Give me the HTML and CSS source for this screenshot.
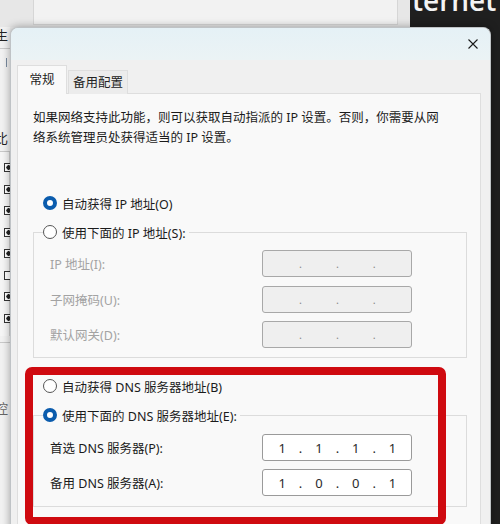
FILE: index.html
```html
<!DOCTYPE html>
<html lang="zh-CN">
<head>
    <meta charset="UTF-8">
    <title>Internet 协议版本 4 (TCP/IPv4) 属性</title>
    <link rel="stylesheet" href="styles.css">
</head>
<body>

<div class="screen">
    <div class="top">
        <div class="top-left"><div class="top-box"></div></div>
        <div class="top-dark"><span class="brand">ternet</span></div>
    </div>

    <div class="main">
        <div class="bgwin">
            <span class="bg-char first">生</span>
            <div class="bg-line"></div>
            <span class="bg-mark"></span>
            <span class="bg-char second">比</span>
            <div class="bg-line"></div>
            <div class="checks">
                <span class="check on"></span>
                <span class="check on"></span>
                <span class="check on"></span>
                <span class="check on"></span>
                <span class="check on"></span>
                <span class="check"></span>
                <span class="check on"></span>
                <span class="check on"></span>
            </div>
            <div class="bg-line"></div>
            <span class="bg-char third">控</span>
        </div>

        <div class="dialog">
            <div class="titlebar">
                <div class="close">
                    <svg width="10" height="10" viewBox="0 0 10 10">
                        <path d="M0.5 0.5 L9.5 9.5 M9.5 0.5 L0.5 9.5" stroke="#1a1a1a" stroke-width="1.1" fill="none"/>
                    </svg>
                </div>
            </div>

            <div class="dlg-body">
                <div class="tabs">
                    <div class="tab active">常规</div>
                    <div class="tab">备用配置</div>
                </div>

                <div class="panel">
                    <p class="intro">如果网络支持此功能，则可以获取自动指派的 IP 设置。否则，你需要从网<br>络系统管理员处获得适当的 IP 设置。</p>

                    <label class="radio checked solo"><span class="dot"></span>自动获得 IP 地址(O)</label>

                    <fieldset class="group ip-group">
                        <legend><label class="radio"><span class="dot"></span>使用下面的 IP 地址(S):</label></legend>
                        <div class="field disabled">
                            <span class="field-label">IP 地址(I):</span>
                            <div class="ip"><span></span><i>.</i><span></span><i>.</i><span></span><i>.</i><span></span></div>
                        </div>
                        <div class="field disabled">
                            <span class="field-label">子网掩码(U):</span>
                            <div class="ip"><span></span><i>.</i><span></span><i>.</i><span></span><i>.</i><span></span></div>
                        </div>
                        <div class="field disabled">
                            <span class="field-label">默认网关(D):</span>
                            <div class="ip"><span></span><i>.</i><span></span><i>.</i><span></span><i>.</i><span></span></div>
                        </div>
                    </fieldset>

                    <label class="radio solo dns-auto"><span class="dot"></span>自动获得 DNS 服务器地址(B)</label>

                    <fieldset class="group dns-group">
                        <legend><label class="radio checked"><span class="dot"></span>使用下面的 DNS 服务器地址(E):</label></legend>
                        <div class="field">
                            <span class="field-label">首选 DNS 服务器(P):</span>
                            <div class="ip"><span>1</span><i>.</i><span>1</span><i>.</i><span>1</span><i>.</i><span>1</span></div>
                        </div>
                        <div class="field">
                            <span class="field-label">备用 DNS 服务器(A):</span>
                            <div class="ip"><span>1</span><i>.</i><span>0</span><i>.</i><span>0</span><i>.</i><span>1</span></div>
                        </div>
                    </fieldset>
                </div>
            </div>
        </div>

        <div class="right-dark"></div>
    </div>

    <div class="highlight"></div>
</div>

</body>
</html>
```

FILE: styles.css
```css
body {
    margin: 0;
    font-family: "Noto Sans", "Noto Sans CJK SC", sans-serif;
    font-size: 12.5px;
    color: #1b1b1b;
    background: #1f1f1f;
}
.screen {
    position: relative;
    width: 500px;
    height: 524px;
    overflow: hidden;
    display: flex;
    flex-direction: column;
}

/* background behind the dialog */
.top {
    display: flex;
    height: 27px;
    flex: none;
}
.top-left {
    width: 410px;
    background: #e7e7e7;
    padding-left: 33px;
    padding-right: 12px;
    box-sizing: border-box;
}
.top-box {
    height: 25px;
    background: #f2f2f2;
    border: 1px solid #d6d6d6;
    border-top: none;
    box-sizing: border-box;
}
.top-dark {
    width: 90px;
    background: #1f1f1f;
    overflow: hidden;
}
.brand {
    display: block;
    margin: -14px 0 0 2px;
    font-family: "Open Sans", sans-serif;
    font-weight: 600;
    font-size: 28px;
    line-height: 28px;
    color: #f4f4f4;
}
.main {
    flex: 1;
    display: flex;
    background: linear-gradient(to right, #ececec 250px, #1f1f1f 250px);
}
.bgwin {
    width: 10px;
    flex: none;
    background: #f2f2f2;
    overflow: hidden;
    display: flex;
    flex-direction: column;
}
.bg-char {
    display: block;
    width: 14px;
    margin-left: -5px;
    font-family: "Noto Sans CJK SC", sans-serif;
    font-size: 13px;
    line-height: 14px;
    color: #222;
}
.bg-char.first { margin-top: 1px; }
.bg-char.second { margin-top: 64px; }
.bg-char.third { margin-top: 58px; color: #666; }
.bg-line {
    height: 1px;
    background: #c9c9c9;
    margin-top: 6px;
}
.bg-mark {
    display: block;
    width: 3px;
    height: 9px;
    margin: 9px 0 0 6px;
    border-left: 1px solid #7a8ba0;
}
.checks {
    display: flex;
    flex-direction: column;
    gap: 12.5px;
    padding: 11px 0 13px 4px;
    border-right: 1px solid #d2d2d2;
    background: #f6f6f6;
}
.check {
    width: 8px;
    height: 9px;
    box-sizing: border-box;
    border: 1px solid #333;
    background: #fff;
}
.check.on {
    background: radial-gradient(circle at 60% 50%, #222 2px, #fff 2.5px);
}
.right-dark {
    width: 9px;
    flex: none;
}

/* dialog */
.dialog {
    width: 481px;
    flex: none;
    background: #f0f0f0;
    border: 1px solid #bfc3c6;
    border-bottom: none;
    border-radius: 8px 8px 0 0;
    box-sizing: border-box;
    box-shadow: 0 0 8px rgba(0, 0, 0, 0.35);
    overflow: hidden;
}
.titlebar {
    height: 32px;
    background: linear-gradient(#e5f1f6, #ebf3f5);
    display: flex;
    justify-content: flex-end;
    align-items: center;
}
.close {
    width: 35px;
    height: 32px;
    display: flex;
    align-items: center;
    justify-content: center;
}
.dlg-body {
    padding: 5px 9px 0 6px;
}
.tabs {
    display: flex;
    align-items: flex-end;
    gap: 1px;
    margin-bottom: -1px;
    position: relative;
}
.tab {
    height: 24px;
    width: 60px;
    box-sizing: border-box;
    border: 1px solid #dedede;
    border-bottom: none;
    background: #ececec;
    text-align: center;
    line-height: 23px;
    color: #222;
}
.tab.active {
    width: 50px;
    height: 29px;
    line-height: 28px;
    background: #f9f9f9;
}
.panel {
    background: #f9f9f9;
    border: 1px solid #dedede;
    padding: 14px 13px 40px 15px;
    height: 460px;
}
.intro {
    margin: 0;
    line-height: 20px;
}

/* radios */
.radio {
    display: flex;
    align-items: center;
    height: 20px;
    white-space: nowrap;
}
.radio .dot {
    width: 14px;
    height: 14px;
    box-sizing: border-box;
    border: 1px solid #555;
    border-radius: 50%;
    background: #fff;
    margin-right: 5px;
    flex: none;
}
.radio.checked .dot {
    border: 4px solid #0b5cad;
}
.radio.solo {
    margin-left: 10px;
}
.ip-group ~ .radio.solo {
    margin-top: 18px;
}
.panel > .radio.solo:first-of-type {
    margin-top: 45px;
}

/* group boxes */
.group {
    margin: 9px 0 0 0;
    padding: 8px 13px 9px 9px;
    border: 1px solid #dcdcdc;
    min-width: 0;
}
.group legend {
    padding: 0 3px 0 0;
}
.dns-group {
    padding-top: 9px;
    padding-bottom: 10px;
}
.field {
    display: flex;
    align-items: center;
    height: 27px;
    margin-left: 7px;
}
.ip-group .field + .field { margin-top: 8.5px; }
.dns-group .field + .field { margin-top: 8px; }
.field-label {
    width: 212px;
    flex: none;
}
.field.disabled .field-label {
    color: #a3a3a3;
}
.ip {
    width: 150px;
    height: 27px;
    box-sizing: border-box;
    border: 1px solid #9a9a9a;
    border-radius: 3px;
    background: #fff;
    display: grid;
    grid-template-columns: repeat(7, 18.4px);
    align-items: center;
    padding-left: 10px;
    font-size: 13px;
    color: #2a2a2a;
}
.field.disabled .ip {
    background: #efefef;
    border-color: #a8a8a8;
}
.ip span, .ip i {
    text-align: center;
    font-style: normal;
}
.field.disabled .ip i {
    color: #8a8a8a;
    font-size: 11px;
}

/* red annotation drawn on top of the screenshot */
.highlight {
    position: absolute;
    left: 25px;
    top: 367px;
    width: 421px;
    height: 158px;
    box-sizing: border-box;
    border: 8px solid #cf0a10;
    border-radius: 7px;
}
```
